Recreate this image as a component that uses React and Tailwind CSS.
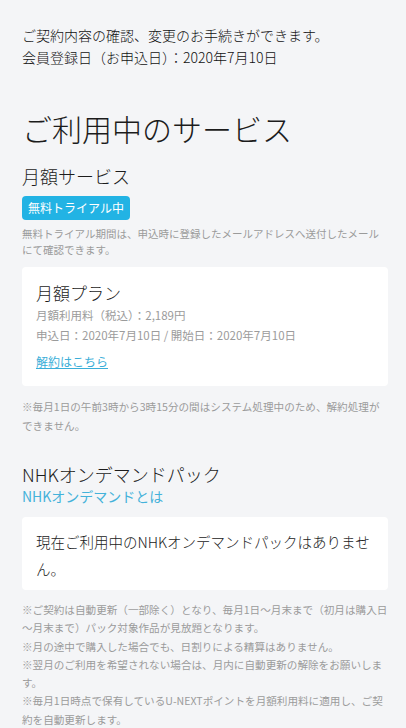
import React from 'react'

const font = { fontFamily: '"Noto Sans CJK JP", "Noto Sans", sans-serif' }

const Note = ({ children, className = '' }) => (
  <p className={`text-[10.6px] text-[#9b9b9b] ${className}`}>{children}</p>
)

export default function App() {
  return (
    <div style={font} className="min-h-screen bg-[#f4f5f7] pl-[22px] pr-[18px] pt-[24px] pb-6 text-[#1c1c1c]">
      <p className="text-[14px] leading-[22px] font-light text-[#111]">
        ご契約内容の確認、変更のお手続きができます。
        <br />
        会員登録日（お申込日）：2020年7月10日
      </p>

      <h1 className="mt-[40px] text-[30px] leading-[40px] font-light">ご利用中のサービス</h1>

      <h2 className="mt-[15px] text-[18px] leading-[26px] font-light">月額サービス</h2>
      <span className="mt-[7px] inline-flex h-[24px] items-center rounded-[4px] bg-[#22b3e4] px-[6px] text-[12px] text-white">
        無料トライアル中
      </span>
      <p className="mt-[6px] text-[10.5px] leading-[16px] text-[#9b9b9b]">
        無料トライアル期間は、申込時に登録したメールアドレスへ送付したメールにて確認できます。
      </p>

      <div className="mt-[9px] rounded-[4px] bg-white px-[14px] pt-[14px] pb-[14px]">
        <h3 className="text-[17px] leading-[24px] font-light">月額プラン</h3>
        <p className="text-[11.5px] leading-[20px] text-[#9b9b9b]">
          月額利用料（税込）：2,189円
          <br />
          申込日：2020年7月10日 / 開始日：2020年7月10日
        </p>
        <a href="#" className="mt-[7px] block text-[12px] leading-[20px] text-[#3aaed8] underline">
          解約はこちら
        </a>
      </div>

      <Note className="mt-[11px] leading-[19px]">
        ※毎月1日の午前3時から3時15分の間はシステム処理中のため、解約処理ができません。
      </Note>

      <h2 className="mt-[27px] text-[18px] leading-[24px] font-light">NHKオンデマンドパック</h2>
      <a href="#" className="block text-[14px] leading-[20px] text-[#44b2da]">NHKオンデマンドとは</a>

      <div className="mt-[11px] rounded-[4px] bg-white px-[14px] pt-[11px] pb-[8px]">
        <p className="text-[14.5px] leading-[27px] font-light text-[#222]">現在ご利用中のNHKオンデマンドパックはありません。</p>
      </div>

      <Note className="mt-[11px] leading-[18.3px]">
        ※ご契約は自動更新（一部除く）となり、毎月1日～月末まで（初月は購入日～月末まで）パック対象作品が見放題となります。
        <br />
        ※月の途中で購入した場合でも、日割りによる精算はありません。
        <br />
        ※翌月のご利用を希望されない場合は、月内に自動更新の解除をお願いします。
        <br />
        ※毎月1日時点で保有しているU-NEXTポイントを月額利用料に適用し、ご契約を自動更新します。
      </Note>
    </div>
  )
}
